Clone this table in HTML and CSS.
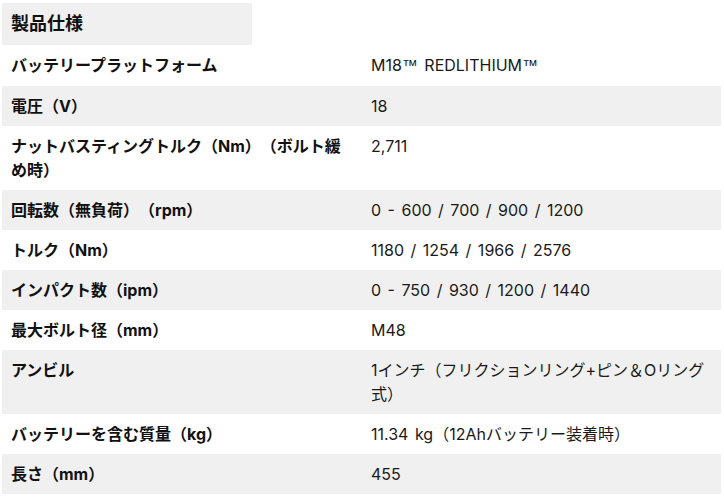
FILE: index.html
```html
<!DOCTYPE html>
<html lang="ja">
<head>
<meta charset="utf-8">
<link rel="stylesheet" href="styles.css">
</head>
<body>
<div class="page">
  <h2 class="title">製品仕様</h2>
  <table class="specs">
    <tr><th>バッテリープラットフォーム</th><td>M18<span class="tm">™</span> REDLITHIUM<span class="tm">™</span></td></tr>
    <tr><th>電圧（V）</th><td>18</td></tr>
    <tr><th>ナットバスティングトルク（Nm）（ボルト緩め時）</th><td>2,711</td></tr>
    <tr><th>回転数（無負荷）（rpm）</th><td>0 - 600 / 700 / 900 / 1200</td></tr>
    <tr><th>トルク（Nm）</th><td>1180 / 1254 / 1966 / 2576</td></tr>
    <tr><th>インパクト数（ipm）</th><td>0 - 750 / 930 / 1200 / 1440</td></tr>
    <tr><th>最大ボルト径（mm）</th><td>M48</td></tr>
    <tr><th>アンビル</th><td>1インチ（フリクションリング+ピン＆Oリング式）</td></tr>
    <tr><th>バッテリーを含む質量（kg）</th><td>11.34 kg（12Ahバッテリー装着時）</td></tr>
    <tr><th>長さ（mm）</th><td>455</td></tr>
  </table>
</div>
</body>
</html>
```
FILE: styles.css
```css
html, body {
  margin: 0;
  padding: 0;
  background: #ffffff;
}
.page {
  padding: 3px 3px 0 2px;
  font-family: Inter, "Noto Sans CJK JP", sans-serif;
  color: #111111;
  text-spacing-trim: space-all;
}
.title {
  margin: 0;
  width: 250px;
  height: 42px;
  box-sizing: border-box;
  padding-left: 9px;
  background: #f0f0f0;
  font-size: 18px;
  font-weight: bold;
  line-height: 42px;
}
.specs {
  width: 719px;
  border-collapse: collapse;
  border-spacing: 0;
}
.specs tr:nth-child(even) {
  background: #f0f0f0;
}
.specs th,
.specs td {
  padding: 8px 9px;
  font-size: 16px;
  line-height: 24px;
  text-align: left;
  vertical-align: top;
  text-spacing-trim: space-all;
}
.specs th {
  width: 342px;
  font-weight: bold;
  color: #111111;
}
.specs td {
  font-weight: normal;
  color: #1a1a1a;
  word-spacing: 2px;
}
.tm {
  font-family: "Liberation Sans", sans-serif;
}
```
